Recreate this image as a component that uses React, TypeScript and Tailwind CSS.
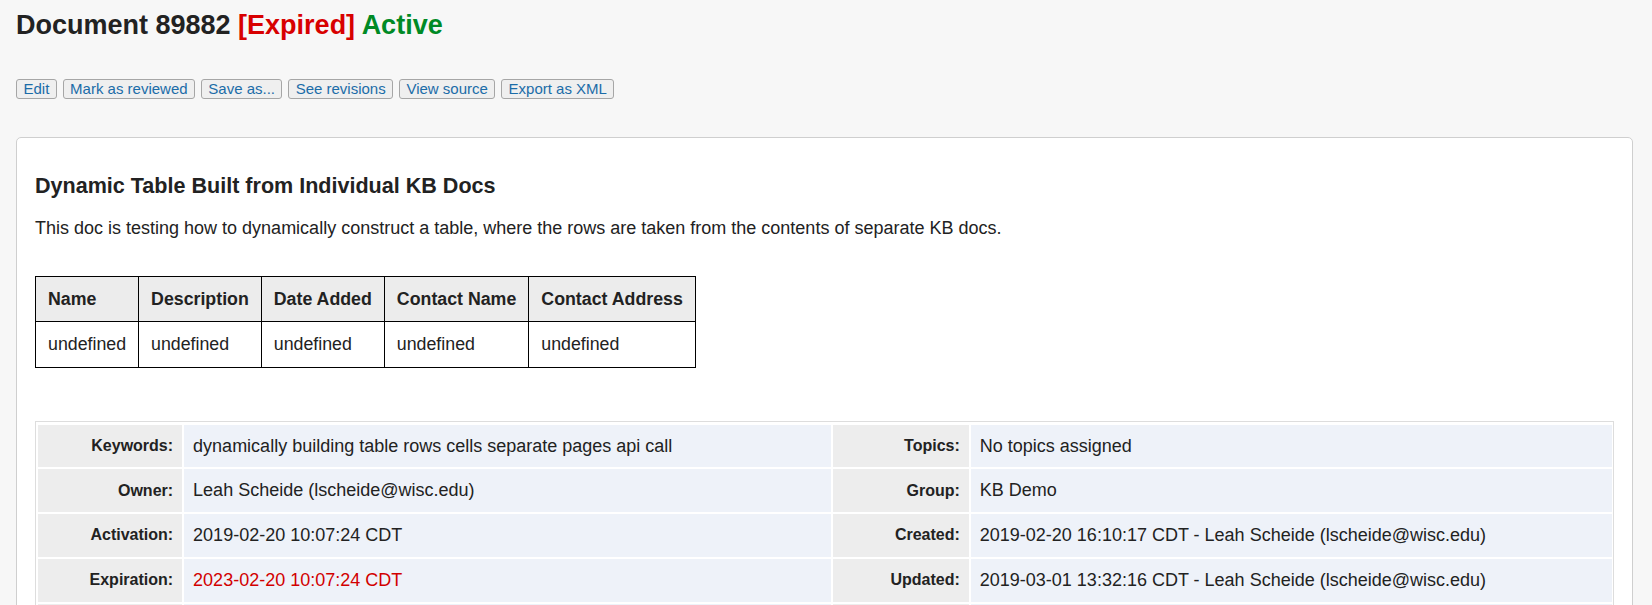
import React from "react";

const buttons = ["Edit", "Mark as reviewed", "Save as...", "See revisions", "View source", "Export as XML"];

type Row = { l1: string; v1: string; v1red?: boolean; l2: string; v2: string };

const rows: Row[] = [
  { l1: "Keywords:", v1: "dynamically building table rows cells separate pages api call", l2: "Topics:", v2: "No topics assigned" },
  { l1: "Owner:", v1: "Leah Scheide (lscheide@wisc.edu)", l2: "Group:", v2: "KB Demo" },
  { l1: "Activation:", v1: "2019-02-20 10:07:24 CDT", l2: "Created:", v2: "2019-02-20 16:10:17 CDT - Leah Scheide (lscheide@wisc.edu)" },
  { l1: "Expiration:", v1: "2023-02-20 10:07:24 CDT", v1red: true, l2: "Updated:", v2: "2019-03-01 13:32:16 CDT - Leah Scheide (lscheide@wisc.edu)" },
];

const cols = ["Name", "Description", "Date Added", "Contact Name", "Contact Address"];

export default function App() {
  return (
    <div className="min-h-screen bg-[#f7f7f7] font-['Liberation_Sans',Arial,sans-serif] text-[#222] pl-[16px] pr-[19px] pb-[40px]">
      <h1 className="pt-[10px] text-[27px] leading-[31px] font-bold">
        Document 89882 <span className="text-[#d80000]">[Expired]</span>{" "}
        <span className="text-[#008a25]">Active</span>
      </h1>

      <div className="mt-[38px] flex gap-[5.7px]">
        {buttons.map((b) => (
          <button
            key={b}
            className="h-[20px] px-[6.5px] border border-[#a6a6a6] rounded-[3px] bg-[#efefef] text-[15px] leading-[18px] text-[#1b6ca8]"
          >
            {b}
          </button>
        ))}
      </div>

      <div className="mt-[38px] bg-white border border-[#cfcfcf] rounded-[5px] px-[18px] pt-[36px] pb-[30px]">
        <h2 className="text-[21.56px] leading-[24.5px] font-bold">Dynamic Table Built from Individual KB Docs</h2>
        <p className="mt-[19px] text-[18px] leading-[20.4px]">
          This doc is testing how to dynamically construct a table, where the rows are taken from the contents of separate KB docs.
        </p>

        <table className="mt-[38px] border-collapse border border-black text-[17.78px] leading-[20.4px]">
          <thead>
            <tr>
              {cols.map((c) => (
                <th key={c} className="border border-black bg-[#ececec] px-[12px] py-[12px] text-left font-bold">
                  {c}
                </th>
              ))}
            </tr>
          </thead>
          <tbody>
            <tr>
              {cols.map((c) => (
                <td key={c} className="border border-black px-[12px] py-[12px]">
                  undefined
                </td>
              ))}
            </tr>
          </tbody>
        </table>

        <div className="mt-[53px] border border-[#dddddd] px-[1.5px] pt-[3px] pb-[2px] grid grid-cols-[144.6px_647px_135.7px_1fr] gap-[2px]">
          {rows.map((r) => (
            <React.Fragment key={r.l1}>
              <div className="bg-[#ededed] flex items-center justify-end pr-[9px] text-[16px] font-bold">{r.l1}</div>
              <div className={`bg-[#eef2f9] pl-[9px] py-[11px] text-[18px] leading-[20.7px] ${r.v1red ? "text-[#d20000]" : ""}`}>
                {r.v1}
              </div>
              <div className="bg-[#ededed] flex items-center justify-end pr-[9px] text-[16px] font-bold">{r.l2}</div>
              <div className="bg-[#eef2f9] pl-[9px] py-[11px] text-[18px] leading-[20.7px]">{r.v2}</div>
            </React.Fragment>
          ))}
          <div className="bg-[#ededed] h-[42.7px]" />
          <div className="bg-[#eef2f9] h-[42.7px]" />
          <div className="bg-[#ededed] h-[42.7px]" />
          <div className="bg-[#eef2f9] h-[42.7px]" />
        </div>
      </div>
    </div>
  );
}
